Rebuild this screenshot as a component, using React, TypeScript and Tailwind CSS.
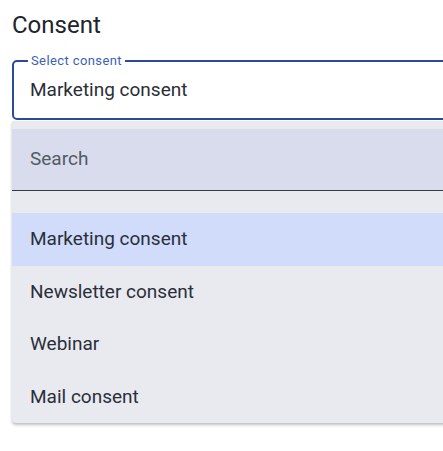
const options = ["Marketing consent", "Newsletter consent", "Webinar", "Mail consent"];

export default function App() {
  const selected = "Marketing consent";

  return (
    <div className="w-[443px] h-[451px] overflow-hidden bg-white font-['Roboto',sans-serif]">
      <div className="w-[480px] pl-3">
        <h2 className="pt-[9px] text-[24px] leading-[32px] text-[#20242c]">Consent</h2>

        <fieldset className="mt-[13px] h-[66px] rounded-[5px] border-2 border-[#2a4a9c] px-[14px]">
          <legend className="px-[3px] text-[13px] leading-[14px] tracking-[0.4px] text-[#3d5fb8]">
            Select consent
          </legend>
          <div className="pl-[2px] pt-[10px] text-[19px] leading-[24px] text-[#2a2e36]">{selected}</div>
        </fieldset>

        <div className="mt-[1px] rounded-b-[4px] bg-[#e9eaef] pt-2 shadow-[0_2px_3px_rgba(0,0,0,0.25)]">
          <div className="flex h-[62px] items-center border-b border-[#343a4a] bg-[#d8dced] pl-[18px] text-[19px] text-[#545a66]">
            Search
          </div>
          <ul className="pt-[22px]">
            {options.map((option) => (
              <li
                key={option}
                className={
                  "flex h-[52.5px] items-center pl-[18px] text-[19px] text-[#2a2f3a] " +
                  (option === selected ? "bg-[#d0dcfa]" : "")
                }
              >
                {option}
              </li>
            ))}
          </ul>
        </div>
      </div>
    </div>
  );
}
